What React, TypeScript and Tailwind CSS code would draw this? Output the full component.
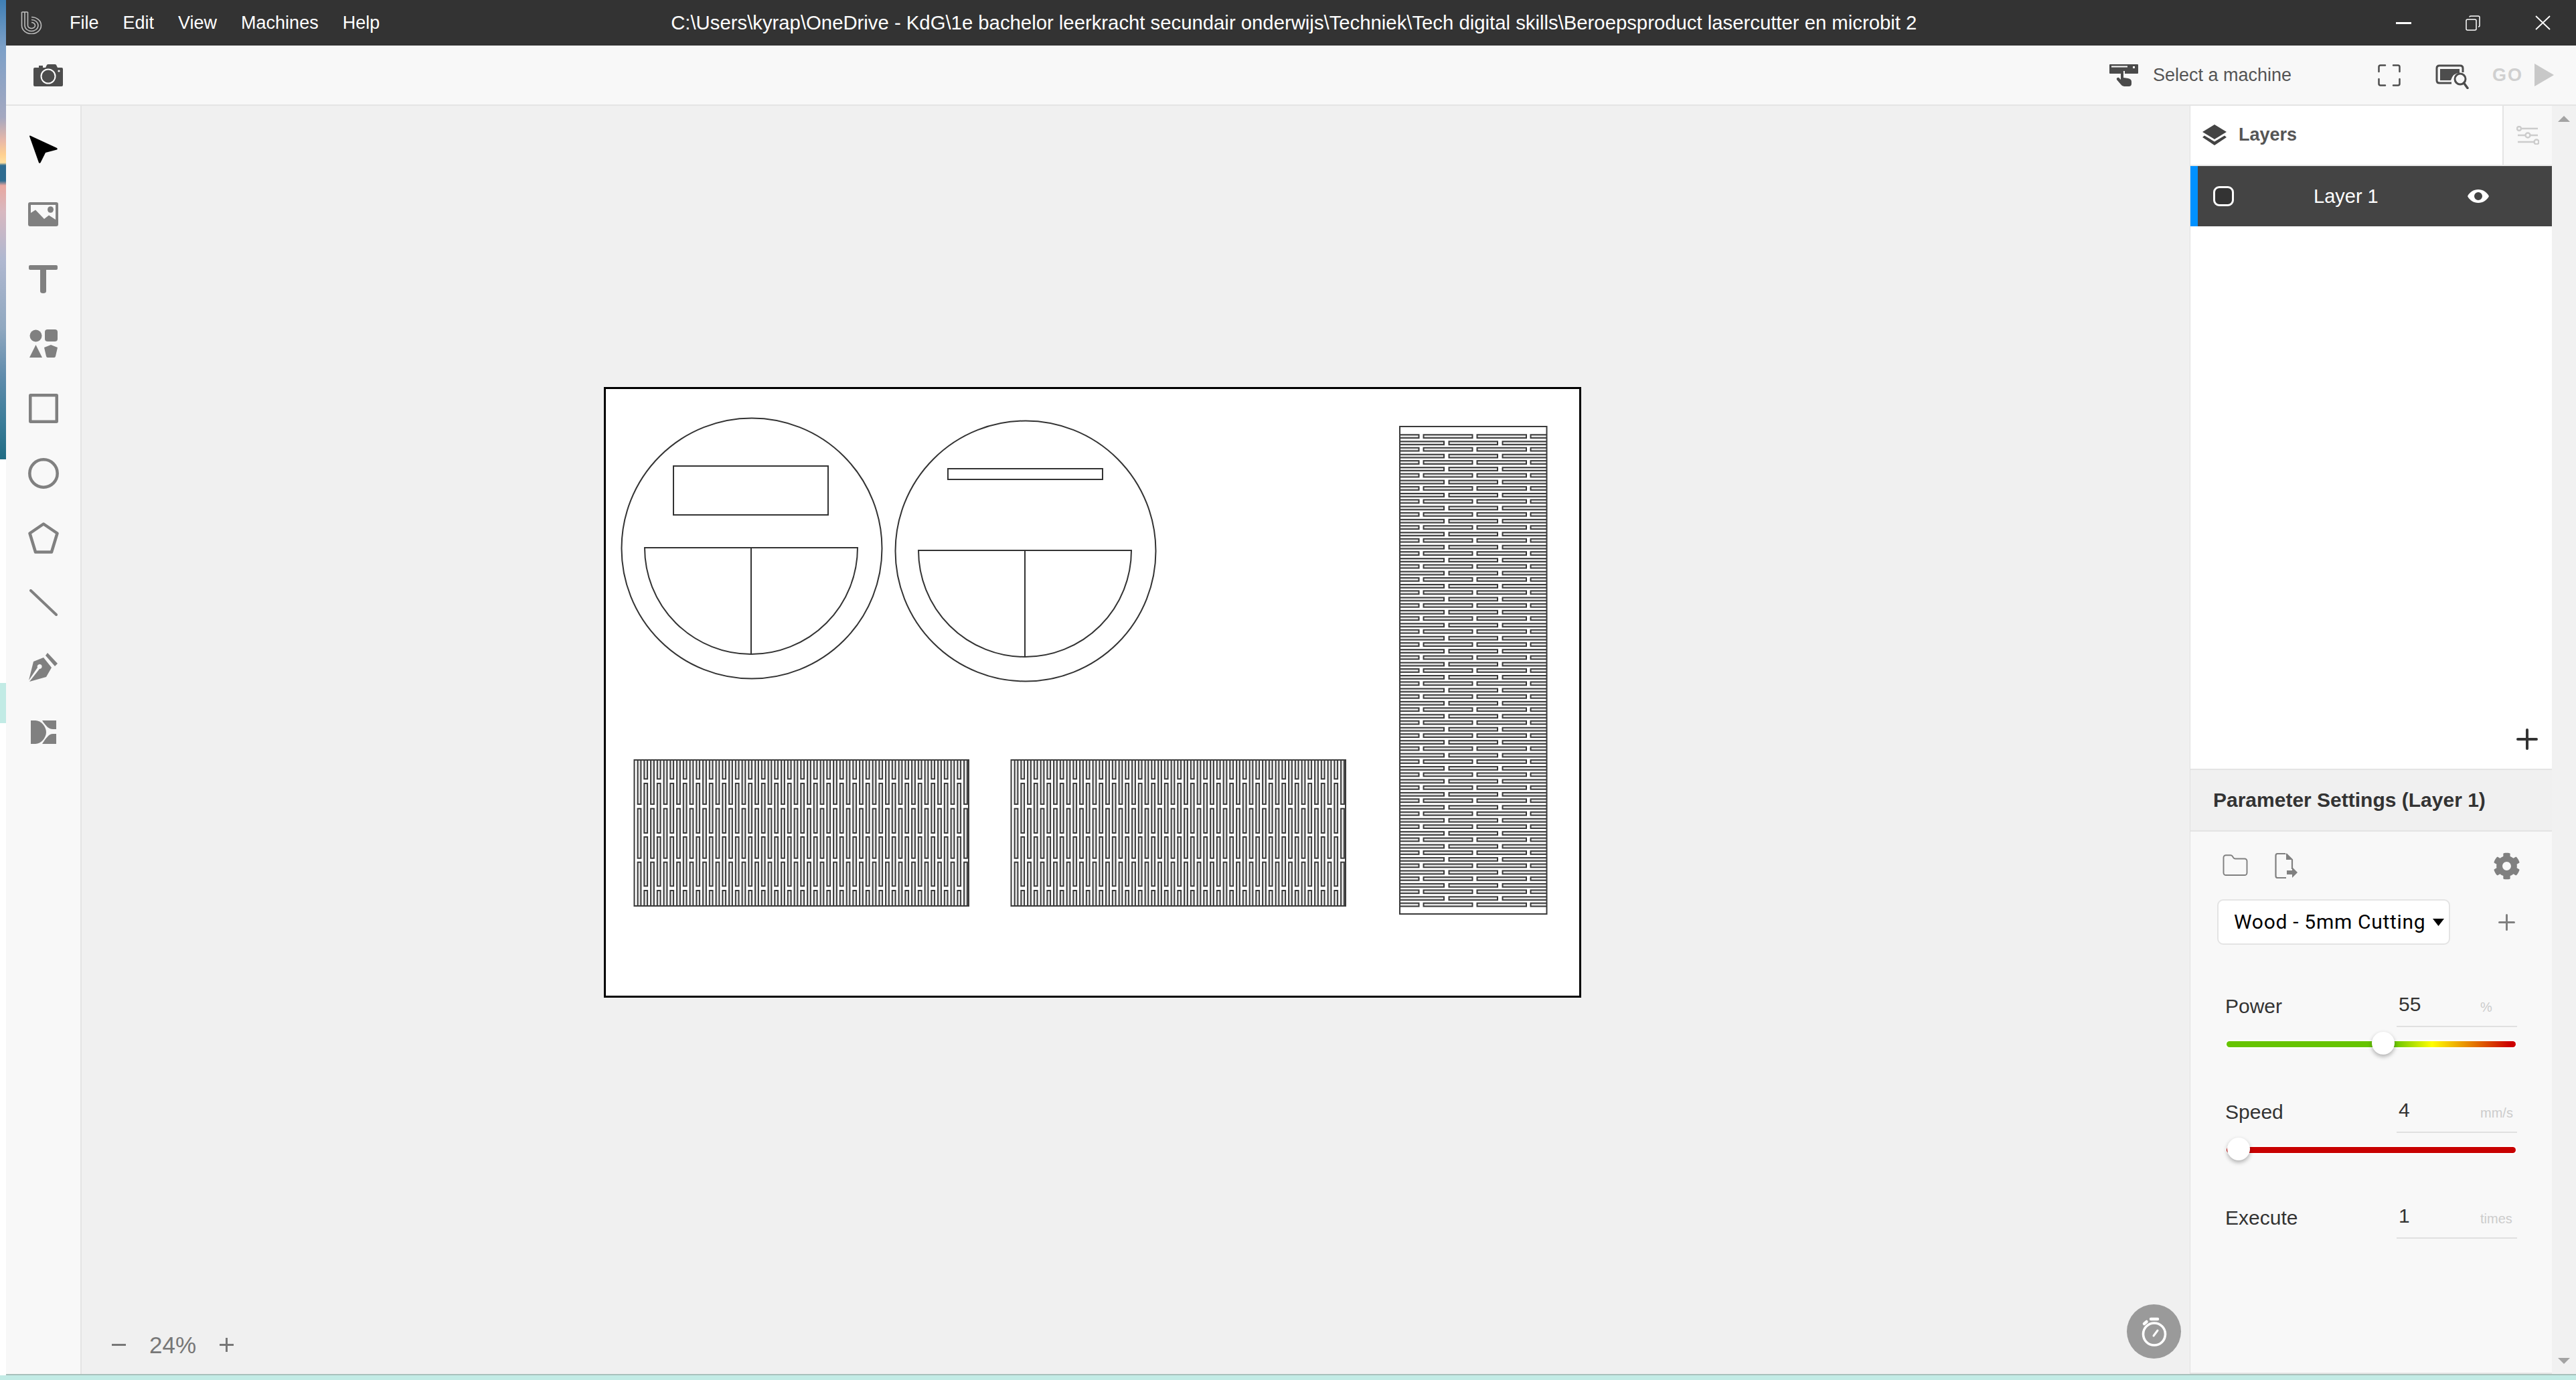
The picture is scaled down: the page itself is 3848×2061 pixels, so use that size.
import { Folder } from 'lucide-react'
import { FaCog } from 'react-icons/fa'

const MENU = ['File', 'Edit', 'View', 'Machines', 'Help']

const range = (n: number) => Array.from({ length: n }, (_, i) => i)

function Logo() {
  return (
    <svg width="32" height="34" viewBox="0 0 32 34" fill="none" stroke="#bdbdbd" strokeWidth="1.6">
      <path d="M1.5 1V21A14.5 12.5 0 1 0 16 8.5" />
      <path d="M6 1V21A10 8.5 0 1 0 16 12.5" />
      <path d="M10.5 1V21A5.5 4.5 0 1 0 16 16.5" />
      <path d="M1.5 1H10.5" />
    </svg>
  )
}

function Camera() {
  return (
    <svg width="44" height="33" viewBox="0 0 44 33">
      <path fill="#4d4d4d" d="M2 5h6V2h6v3h4l2-4q.5-1 2-1h10q1.500 0 2 1l2 4h6q2 0 2 2v24q0 2-2 2H2q-2 0-2-2V7q0-2 2-2z" />
      <circle cx="22" cy="18" r="10.500" fill="none" stroke="#fff" strokeWidth="2" />
      <circle cx="38" cy="10" r="1.600" fill="#fff" />
    </svg>
  )
}

function MachineIcon() {
  return (
    <svg width="43" height="33" viewBox="0 0 43 33" fill="#4a4a4a">
      <path d="M1 0h41q1 0 1 1v12q0 1-1 1H23V10h-4v4H1q-1 0-1-1V1q0-1 1-1z" />
      <rect x="3" y="2.500" width="24" height="2" fill="#fff" />
      <rect x="35" y="3" width="3" height="3" fill="#fff" />
      <path d="M17 11q0-2 2-2t2 2v9l7 1q5 1 5 5v3q0 4-4 4h-7q-3 0-5-3l-6-7q-1-2 1-3t3 1l2 2z" />
    </svg>
  )
}

function FullscreenIcon() {
  return (
    <svg width="34" height="33" viewBox="0 0 34 33" fill="none" stroke="#4d4d4d" strokeWidth="2.500" strokeLinecap="round">
      <path d="M11 1.500H4Q1.500 1.500 1.500 4V11M23 1.500H30Q32.500 1.500 32.500 4V11M11 31.500H4Q1.500 31.500 1.500 29V22M23 31.500H30Q32.500 31.500 32.500 29V22" />
    </svg>
  )
}

function ScreenSearch() {
  return (
    <svg width="50" height="37" viewBox="0 0 50 37" fill="none">
      <path d="M24 28H6Q2 28 2 24V6Q2 2 6 2H37Q41 2 41 6V12" stroke="#4d4d4d" strokeWidth="3" />
      <path d="M7 7H36V13Q26 13 23 24H7Z" fill="#4d4d4d" />
      <circle cx="37" cy="22" r="8" stroke="#4d4d4d" strokeWidth="3" />
      <path d="M42.500 28L48 35.500" stroke="#4d4d4d" strokeWidth="3.500" strokeLinecap="round" />
    </svg>
  )
}

function CursorTool() {
  return (
    <svg width="42" height="42" viewBox="0 0 42 42" fill="#000">
      <path d="M1 0.500L41 19Q42.500 20.500 41 21.500L24 26L16.500 41Q15 42.500 14 41L0 1.500Q0 0 1 0.500Z" />
    </svg>
  )
}

function ImageTool() {
  return (
    <svg width="45" height="36" viewBox="0 0 45 36" fill="#808080">
      <path fillRule="evenodd" d="M3 0H42Q45 0 45 3V33Q45 36 42 36H3Q0 36 0 33V3Q0 0 3 0ZM4 4V16L11 11.500L24 25L31 19.500L41 26V4Z" />
      <ellipse cx="33.500" cy="11" rx="4.500" ry="4.800" />
    </svg>
  )
}

function TextTool() {
  return (
    <svg width="43" height="42" viewBox="0 0 43 42" fill="#808080">
      <path d="M2 0H41Q43 0 43 2V5Q43 7 41 7H26V39Q26 42 21.500 42T17 39V7H2Q0 7 0 5V2Q0 0 2 0Z" />
    </svg>
  )
}

function ShapesTool() {
  return (
    <svg width="42" height="42" viewBox="0 0 42 42" fill="#808080">
      <ellipse cx="9.500" cy="9.500" rx="9" ry="9" />
      <rect x="23" y="0" width="19" height="18" rx="4" />
      <path d="M9.500 23L19 42H0Z" />
      <path d="M32 23L42 27L39 40Q38.500 42 37 42H27Q25.500 42 25 40L22 27Z" />
    </svg>
  )
}

function PenTool() {
  return (
    <svg width="43" height="43" viewBox="0 0 43 43">
      <path fill="#808080" d="M28 0L43 16L39 20L25 4Z" />
      <path fill="#808080" fillRule="evenodd" d="M22 7L34 22L26 36L1 43L16 24A3.500 3.500 0 1 0 13 22L0 41L7 13Z" />
    </svg>
  )
}

function SplitTool() {
  return (
    <svg width="38" height="35" viewBox="0 0 38 35" fill="#808080">
      <path d="M0 0H7C15 0 23 9 23 17.500S15 35 7 35H0Z" />
      <path d="M17 0H38V13H33C27 13 23 9 17 0Z" />
      <path d="M38 35H17C23 26 27 20 33 20H38Z" />
    </svg>
  )
}

const TOOLS = [
  <CursorTool key="cursor" />,
  <ImageTool key="image" />,
  <TextTool key="text" />,
  <ShapesTool key="shapes" />,
  <svg key="rect" width="44" height="44" viewBox="0 0 44 44" fill="none" stroke="#808080" strokeWidth="4.500">
    <rect x="2.250" y="2.250" width="39.500" height="39.500" rx="0.500" />
  </svg>,
  <svg key="ellipse" width="46" height="46" viewBox="0 0 46 46" fill="none" stroke="#808080" strokeWidth="4.500">
    <circle cx="23" cy="23" r="20.700" />
  </svg>,
  <svg key="pentagon" width="46" height="47" viewBox="0 0 46 47" fill="none" stroke="#808080" strokeWidth="4.500" strokeLinejoin="round">
    <path d="M23 2.500L43.500 16.500L35 44.500H11L2.500 16.500Z" />
  </svg>,
  <svg key="line" width="42" height="40" viewBox="0 0 42 40" fill="none" stroke="#808080" strokeWidth="4" strokeLinecap="round">
    <path d="M2 2L40 38" />
  </svg>,
  <PenTool key="pen" />,
  <SplitTool key="split" />,
]

// living-hinge slots that run top to bottom
function HingeV({ x0, id }: { x0: number; id: string }) {
  const top = 1135
  const bottom = 1353
  const a = [[1130, 1163.3], [1170, 1244], [1250, 1323.3], [1330, 1360]]
  const b = [[1130, 1201], [1207.7, 1281.7], [1287.7, 1360]]
  return (
    <g strokeWidth="2" stroke="#3a3a3a">
      <clipPath id={id}>
        <rect x={x0} y={top} width={499.500} height={bottom - top} />
      </clipPath>
      <g clipPath={`url(#${id})`} fill="#e4e4e4">
        {range(26).map((i) => (
          <g key={i}>
            {a.map(([y1, y2]) => (
              <rect key={y1} x={x0 + 14.8 + i * 19.5} y={y1} width={4.8} height={y2 - y1} />
            ))}
            {b.map(([y1, y2]) => (
              <rect key={y1} x={x0 + 5.1 + i * 19.5} y={y1} width={4.8} height={y2 - y1} />
            ))}
          </g>
        ))}
      </g>
      <rect x={x0} y={top} width={499.500} height={bottom - top} />
    </g>
  )
}

// same pattern turned on its side, for the tall piece
function HingeH() {
  const a = [[2080, 2119.5], [2126.5, 2199.5], [2206.5, 2280], [2286.5, 2320]]
  const b = [[2080, 2157], [2164.5, 2237], [2244.5, 2320]]
  return (
    <g strokeWidth="2" stroke="#3a3a3a">
      <clipPath id="hinge-h">
        <rect x={2091} y={637} width={219.5} height={728} />
      </clipPath>
      <g clipPath="url(#hinge-h)" fill="#e4e4e4">
        {range(37).map((i) => (
          <g key={i}>
            {a.map(([x1, x2]) => (
              <rect key={x1} x={x1} y={649.3 + i * 19.43} width={x2 - x1} height={4.8} />
            ))}
            {i < 36 &&
              b.map(([x1, x2]) => (
                <rect key={x1} x={x1} y={659.3 + i * 19.43} width={x2 - x1} height={4.8} />
              ))}
          </g>
        ))}
      </g>
      <rect x={2091} y={637} width={219.5} height={728} />
    </g>
  )
}

function Disc({ dx, dy, rect }: { dx: number; dy: number; rect: [number, number, number, number] }) {
  return (
    <g>
      <circle cx={1123 + dx} cy={819 + dy} r={194.500} />
      <rect x={rect[0]} y={rect[1]} width={rect[2]} height={rect[3]} />
      <path d={`M${963 + dx} ${818 + dy}H${1281 + dx}A159 159 0 0 1 ${963 + dx} ${818 + dy}Z`} />
      <path d={`M${1122 + dx} ${818 + dy}V${977 + dy}`} />
    </g>
  )
}

function Drawing() {
  return (
    <svg
      className="absolute left-[780px] top-[420px]"
      width="1460"
      height="912"
      viewBox="902 578 1460 912"
      fill="none"
      stroke="#333"
      strokeWidth="2"
    >
      <rect x="903.500" y="579.500" width="1457" height="909" fill="#fff" stroke="#000" strokeWidth="3" />
      <Disc dx={0} dy={0} rect={[1006, 696, 231, 73]} />
      <Disc dx={409} dy={4} rect={[1416, 700, 231, 16]} />
      <HingeV x0={947.500} id="hinge-a" />
      <HingeV x0={1510.500} id="hinge-b" />
      <HingeH />
    </svg>
  )
}

function Slider({ pos, track }: { pos: number; track: string }) {
  return (
    <div className="relative ml-[2px] h-[34px] w-[432px]">
      <div className={`absolute left-0 right-0 top-[14px] h-[9px] rounded-full ring-2 ring-white ${track}`} />
      <div
        className="absolute top-0 h-[34px] w-[34px] rounded-full bg-white shadow-[0_3px_6px_rgba(0,0,0,0.3)]"
        style={{ left: pos }}
      />
    </div>
  )
}

function Param({ label, value, unit, children }: { label: string; value: string; unit: string; children?: React.ReactNode }) {
  return (
    <div className="h-[158px]">
      <div className="flex h-[51px] justify-between">
        <span className="text-[30px] leading-[40px] text-[#333]">{label}</span>
        <div className="flex w-[180px] border-b-2 border-[#e0e0e0]">
          <span className="w-[125px] pl-[3px] text-[30px] leading-[34px] text-[#333]">{value}</span>
          <span className="pt-[6px] text-[20px] leading-[30px] text-[#ccc]">{unit}</span>
        </div>
      </div>
      <div className="mt-[7px]">{children}</div>
    </div>
  )
}

function RightPanel() {
  return (
    <aside className="flex w-[541px] flex-col border-l border-[#e0e0e0]">
      <div className="flex h-[90px] border-b-2 border-[#e8e8e8]">
        <div className="flex flex-1 items-center gap-[18px] bg-white pl-[18px] pb-[2px]">
          <svg width="36" height="31" viewBox="0 0 36 31" fill="#444">
            <path d="M18 0L36 11L18 22L0 11Z" />
            <path d="M3 16.500L18 25.500L33 16.500L36 19L18 31L0 19Z" />
          </svg>
          <span className="text-[27px] font-bold leading-none text-[#555]">Layers</span>
        </div>
        <div className="flex w-[74px] items-center justify-center border-l-2 border-[#e4e4e4] bg-[#f8f8f8]">
          <svg width="34" height="28" viewBox="0 0 34 28" fill="none" stroke="#ccc" strokeWidth="2.500">
            <circle cx="4" cy="4" r="3" />
            <path d="M7 4H32" />
            <path d="M2 14H13M21 14H32" />
            <circle cx="17" cy="14" r="3.500" />
            <path d="M2 24H26" />
            <circle cx="30" cy="24" r="3.500" />
          </svg>
        </div>
      </div>

      <div className="flex h-[90px] items-center border-l-[11px] border-[#0091ff] bg-[#444]">
        <div className="ml-[23px] h-[30px] w-[31px] rounded-[9px] border-[3px] border-white bg-[#333]" />
        <span className="ml-[119px] w-[230px] text-[29px] leading-none text-white">Layer 1</span>
        <svg width="32" height="20" viewBox="0 0 32 20" fill="#fff">
          <path fillRule="evenodd" d="M16 0C23 0 29 4 32 10C29 16 23 20 16 20S3 16 0 10C3 4 9 0 16 0ZM16 4A6 6 0 1 0 16 16A6 6 0 1 0 16 4Z" />
        </svg>
      </div>

      <div className="flex flex-1 items-end justify-end bg-white pb-[28px] pr-[21px]">
        <svg width="32" height="32" viewBox="0 0 32 32" stroke="#333" strokeWidth="4" strokeLinecap="round">
          <path d="M16 2V30M2 16H30" />
        </svg>
      </div>

      <div className="flex h-[94px] items-center border-y-2 border-[#e4e4e4] bg-[#f0f0f0] pl-[34px]">
        <span className="text-[30px] font-bold leading-none text-[#333]">Parameter Settings (Layer 1)</span>
      </div>

      <div className="h-[810px] border-b-2 border-[#e4e4e4] bg-[#f8f8f8] pl-[40px]">
        <div className="mt-[31px] flex h-[40px] w-[453px] items-center pl-[6px]">
          <Folder size={42} strokeWidth={1.1} color="#808080" />
          <svg className="ml-[38px]" width="34" height="38" viewBox="0 0 34 38" fill="none">
            <path d="M16 1H4Q1.500 1 1.500 4V34Q1.500 37 4 37H17M26 24V10L17 1" stroke="#808080" strokeWidth="2.200" />
            <path d="M17 1V10H26Z" fill="#808080" />
            <path d="M18 26H26V21L34 29L26 37V32H18Z" fill="#808080" />
          </svg>
          <FaCog className="ml-auto" size={41} color="#808080" />
        </div>

        <div className="mt-[30px] flex items-center">
          <div className="flex h-[68px] w-[348px] items-center rounded-[9px] border-2 border-[#e4e4e4] bg-white pl-[23px]">
            <span className="w-[297px] font-['Roboto',sans-serif] text-[30px] tracking-[0.7px] leading-none text-black">
              Wood - 5mm Cutting
            </span>
            <svg width="17" height="11" viewBox="0 0 17 11" fill="#000">
              <path d="M0 0H17L8.500 11Z" />
            </svg>
          </div>
          <svg className="ml-[72px]" width="25" height="25" viewBox="0 0 25 25" stroke="#808080" strokeWidth="3" strokeLinecap="round">
            <path d="M12.500 1.500V23.500M1.500 12.500H23.500" />
          </svg>
        </div>

        <div className="ml-[12px] mt-[72px] w-[436px]">
          <Param label="Power" value="55" unit="%">
            <Slider pos={217} track="bg-[linear-gradient(to_right,#66c400_0%,#66c400_58%,#ffff00_71%,#cc0000_98%)]" />
          </Param>
          <Param label="Speed" value="4" unit="mm/s">
            <Slider pos={1} track="bg-[#c80000]" />
          </Param>
          <Param label="Execute" value="1" unit="times" />
        </div>
      </div>
    </aside>
  )
}

export default function App() {
  return (
    <div className="flex h-[2061px] w-[3848px] flex-col overflow-hidden bg-white font-['Liberation_Sans',Arial,sans-serif]">
      <div className="flex h-[2054px]">
        <div className="flex w-[9px] flex-col">
          <div className="h-[686px] bg-[linear-gradient(to_bottom,#3f7fb5_0px,#7ca0c8_70px,#a4a8c0_175px,#e8b8a8_210px,#ffd090_231px,#ffe0a0_243px,#2f6c90_247px,#2f6c90_270px,#e8a8a0_277px,#d8b8c0_316px,#b0b8d0_386px,#90a8c0_490px,#608cac_561px,#3a7c98_632px,#206c84_686px)]" />
          <div className="h-[334px]" />
          <div className="h-[60px] bg-[#c2ebe5]" />
        </div>

        <div className="flex min-w-0 flex-1 flex-col">
          <header className="flex h-[68px] items-center bg-[#333] text-[27px] text-white">
            <div className="ml-[22px] mr-[41px]">
              <Logo />
            </div>
            <nav className="flex gap-[36px]">
              {MENU.map((m) => (
                <span key={m} className="leading-none">
                  {m}
                </span>
              ))}
            </nav>
            <span className="ml-[435px] whitespace-nowrap text-[29.3px] leading-none">
              C:\Users\kyrap\OneDrive - KdG\1e bachelor leerkracht secundair onderwijs\Techniek\Tech digital skills\Beroepsproduct lasercutter en microbit 2
            </span>
            <div className="ml-auto flex items-center gap-[4px]">
              <div className="flex w-[100px] justify-center">
                <div className="h-[3px] w-[23px] bg-white" />
              </div>
              <div className="flex w-[100px] justify-center">
                <svg width="22" height="23" viewBox="0 0 22 23" fill="none" stroke="#fff" strokeWidth="1.500">
                  <rect x="1" y="6" width="15" height="16" rx="2" />
                  <path d="M6 2.500Q6 1 8 1H19Q21 1 21 3V15Q21 17 19 17" />
                </svg>
              </div>
              <div className="flex w-[100px] justify-center">
                <svg width="23" height="22" viewBox="0 0 23 22" stroke="#fff" strokeWidth="1.800">
                  <path d="M1 1L22 21M22 1L1 21" />
                </svg>
              </div>
            </div>
          </header>

          <div className="flex h-[90px] items-center border-b-2 border-[#e4e4e4] bg-[#f8f8f8] pl-[41px] pr-[33px]">
            <Camera />
            <div className="ml-auto flex items-center">
              <MachineIcon />
              <span className="ml-[22px] w-[336px] text-[27px] leading-none text-[#555]">Select a machine</span>
              <FullscreenIcon />
              <div className="ml-[52px] mt-[4px]">
                <ScreenSearch />
              </div>
              <span className="ml-[35px] text-[27px] font-bold leading-none tracking-[2px] text-[#d0d0d0]">GO</span>
              <svg className="ml-[17px]" width="29" height="34" viewBox="0 0 29 34" fill="#c8c8c8">
                <path d="M0 0L29 17L0 34Z" />
              </svg>
            </div>
          </div>

          <div className="flex min-h-0 flex-1">
            <div className="w-[113px] border-r-2 border-[#e4e4e4] bg-[#f8f8f8] pt-[17px]">
              {TOOLS.map((t, i) => (
                <div key={i} className="flex h-[96.7px] items-center justify-center">
                  {t}
                </div>
              ))}
            </div>

            <main className="relative flex-1 bg-[#f0f0f0]">
              <Drawing />
              <div className="absolute bottom-[26px] left-[45px] flex items-center text-[#777]">
                <svg width="21" height="3" viewBox="0 0 21 3" fill="#777">
                  <rect width="21" height="3" />
                </svg>
                <span className="ml-[35px] text-[35px] leading-none">24%</span>
                <svg className="ml-[35px]" width="21" height="21" viewBox="0 0 21 21" fill="#777">
                  <path d="M9 0H12V9H21V12H12V21H9V12H0V9H9Z" />
                </svg>
              </div>
              <div className="absolute bottom-[23px] right-[13px] flex h-[81px] w-[81px] items-center justify-center rounded-full bg-[#9a9a9a]">
                <svg width="40" height="44" viewBox="0 0 40 44" fill="none" stroke="#fff" strokeLinecap="round">
                  <circle cx="20" cy="25.500" r="16.500" strokeWidth="3.600" />
                  <path d="M15 3H25" strokeWidth="4.500" />
                  <path d="M5 10L8.500 7" strokeWidth="4.500" />
                  <path d="M19 28L25 20" strokeWidth="3" />
                </svg>
              </div>
            </main>

            <RightPanel />

            <div className="flex w-[36px] flex-col items-center justify-between bg-[#f1f1f1] pb-[15px] pt-[15px]">
              <svg width="18" height="9" viewBox="0 0 18 9" fill="#a3a3a3">
                <path d="M9 0L18 9H0Z" />
              </svg>
              <svg width="18" height="9" viewBox="0 0 18 9" fill="#a3a3a3">
                <path d="M0 0H18L9 9Z" />
              </svg>
            </div>
          </div>
          <div className="h-[2px] bg-[#a8c0bb]" />
        </div>
      </div>
      <div className="h-[7px] bg-[#c2ebe5]" />
    </div>
  )
}
